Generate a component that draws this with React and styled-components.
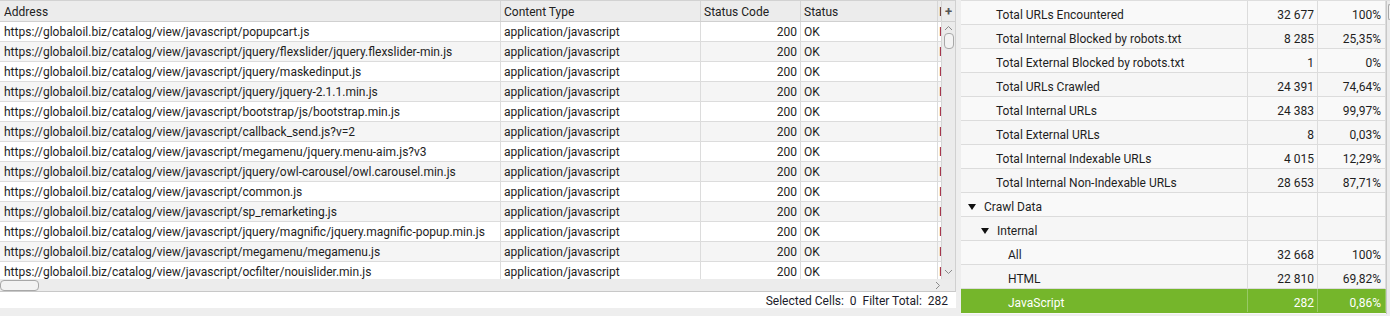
import React from 'react'
import styled, { createGlobalStyle } from 'styled-components'

const GlobalStyle = createGlobalStyle`
  html, body {
    margin: 0;
    padding: 0;
    overflow: hidden;
    background: #eeeeee;
    font-family: Roboto, 'Liberation Sans', sans-serif;
    font-size: 12px;
    color: #1e1e1e;
  }
`

const BASE = 'https://globaloil.biz/catalog/view/javascript/'

const urls = [
  'popupcart.js',
  'jquery/flexslider/jquery.flexslider-min.js',
  'jquery/maskedinput.js',
  'jquery/jquery-2.1.1.min.js',
  'bootstrap/js/bootstrap.min.js',
  'callback_send.js?v=2',
  'megamenu/jquery.menu-aim.js?v3',
  'jquery/owl-carousel/owl.carousel.min.js',
  'common.js',
  'sp_remarketing.js',
  'jquery/magnific/jquery.magnific-popup.min.js',
  'megamenu/megamenu.js',
  'ocfilter/nouislider.min.js',
]

const overview = [
  { label: 'Total URLs Encountered', count: '32 677', pct: '100%', level: 2 },
  { label: 'Total Internal Blocked by robots.txt', count: '8 285', pct: '25,35%', level: 2 },
  { label: 'Total External Blocked by robots.txt', count: '1', pct: '0%', level: 2 },
  { label: 'Total URLs Crawled', count: '24 391', pct: '74,64%', level: 2 },
  { label: 'Total Internal URLs', count: '24 383', pct: '99,97%', level: 2 },
  { label: 'Total External URLs', count: '8', pct: '0,03%', level: 2 },
  { label: 'Total Internal Indexable URLs', count: '4 015', pct: '12,29%', level: 2 },
  { label: 'Total Internal Non-Indexable URLs', count: '28 653', pct: '87,71%', level: 2 },
  { label: 'Crawl Data', level: 0, open: true },
  { label: 'Internal', level: 1, open: true },
  { label: 'All', count: '32 668', pct: '100%', level: 3 },
  { label: 'HTML', count: '22 810', pct: '69,82%', level: 3 },
  { label: 'JavaScript', count: '282', pct: '0,86%', level: 3, selected: true },
]

const indent = [7, 20, 35, 47]

const Page = styled.div`
  display: flex;
  width: 1390px;
  height: 316px;
  overflow: hidden;
  background: #eeeeee;
`

const LeftPane = styled.div`
  display: flex;
  flex-direction: column;
  width: 956px;
  flex-shrink: 0;
`

const GridFrame = styled.div`
  display: flex;
  height: 279px;
  background: #ffffff;
`

const Table = styled.div`
  width: 942px;
  overflow: hidden;
`

const cols = '501px 200px 100px 137px 40px'

const HeaderRow = styled.div`
  display: grid;
  grid-template-columns: ${cols};
  height: 22px;
  background: #ececec;
  border-top: 1px solid #d2d2d2;
  border-bottom: 1px solid #d0d0d0;
  box-sizing: border-box;
`

const HeaderCell = styled.div`
  padding: 2px ${({ $pad }) => $pad ?? 4}px 0;
  line-height: 18px;
  white-space: nowrap;
  overflow: hidden;
  border-right: 1px solid #d6d6d6;
  color: #222;
`

const Row = styled.div`
  display: grid;
  grid-template-columns: ${cols};
  height: 20px;
  background: ${({ $alt }) => ($alt ? '#f5f5f5' : '#ffffff')};
  border-bottom: 1px solid #dcdcdc;
  box-sizing: border-box;
`

const Cell = styled.div`
  padding: 2px ${({ $pad }) => $pad ?? 4}px 0;
  line-height: 17px;
  white-space: nowrap;
  overflow: hidden;
  text-align: ${({ $right }) => ($right ? 'right' : 'left')};
  border-right: 1px solid #dcdcdc;
  color: ${({ $color }) => $color || '#1e1e1e'};
`

const VScroll = styled.div`
  width: 13px;
  display: flex;
  flex-direction: column;
  align-items: center;
  background: #ebebeb;
  border-left: 1px solid #d6d6d6;
  border-right: 1px solid #d0d0d0;
`

const PlusButton = styled.div`
  width: 100%;
  height: 22px;
  border-top: 1px solid #d2d2d2;
  border-bottom: 1px solid #d0d0d0;
  box-sizing: border-box;
  display: flex;
  align-items: center;
  justify-content: center;
  font-weight: 700;
  font-size: 13px;
  color: #555;
`

const Thumb = styled.div`
  width: ${({ $w }) => $w}px;
  height: ${({ $h }) => $h}px;
  border: 1px solid #a8a8a8;
  border-radius: 4px;
  background: #f3f3f3;
  box-sizing: border-box;
  margin-top: ${({ $mt }) => $mt || 0}px;
`

const Arrow = styled.svg`
  display: block;
  flex-shrink: 0;
`

const Spacer = styled.div`
  flex: 1;
`

const HScroll = styled.div`
  height: 13px;
  display: flex;
  align-items: center;
  background: #ececec;
  border-bottom: 1px solid #c8c8c8;
  border-right: 1px solid #d0d0d0;
  box-sizing: border-box;
  padding-right: 14px;
`

const StatusBar = styled.div`
  height: 16px;
  box-sizing: border-box;
  padding: 3px 8px 0 0;
  background: #ffffff;
  text-align: right;
  line-height: 13px;
  white-space: pre;
  color: #1c1c2a;
`

const Gap = styled.div`
  width: 5px;
  flex-shrink: 0;
`

const RightPane = styled.div`
  flex: 1;
  display: flex;
  height: 313px;
  overflow: hidden;
  border-top: 1px solid #dedede;
  background: #f8f8f8;
`

const Overview = styled.div`
  width: 425px;
`

const OverRow = styled.div`
  display: grid;
  grid-template-columns: 287px 70px 68px;
  height: 24px;
  box-sizing: border-box;
  border-bottom: 1px solid ${({ $sel }) => ($sel ? '#75b62b' : '#dcdcdc')};
  background: ${({ $sel, $alt }) => ($sel ? '#75b62b' : $alt ? '#f6f6f6' : '#f9f9f9')};
  color: ${({ $sel }) => ($sel ? '#ffffff' : '#1e1e1e')};
`

const OverCell = styled.div`
  display: flex;
  align-items: center;
  justify-content: ${({ $right }) => ($right ? 'flex-end' : 'flex-start')};
  padding: 4px ${({ $pr }) => $pr || 0}px 0 ${({ $pl }) => $pl || 0}px;
  border-right: 1px solid ${({ $sel }) => ($sel ? '#98c967' : '#dcdcdc')};
  white-space: nowrap;
  overflow: hidden;
`

const Caret = styled.span`
  width: 16px;
  flex-shrink: 0;
  display: flex;
  align-items: center;

  &::before {
    content: '';
    border-left: 4px solid transparent;
    border-right: 4px solid transparent;
    border-top: 6px solid #111;
  }
`

const RightScroll = styled.div`
  flex: 1;
  border-left: 1px solid #c8c8c8;
  padding-top: 3px;
  background: #ebebeb;
`

const RightThumb = styled.div`
  height: 14px;
  border: 1px solid #a8a8a8;
  border-right: none;
  border-radius: 4px 0 0 4px;
  background: #f3f3f3;
  margin-left: 1px;
`

export default function App() {
  return (
    <>
      <GlobalStyle />
      <Page>
        <LeftPane>
          <GridFrame>
            <Table>
              <HeaderRow>
                <HeaderCell>Address</HeaderCell>
                <HeaderCell $pad={3}>Content Type</HeaderCell>
                <HeaderCell $pad={3}>Status Code</HeaderCell>
                <HeaderCell $pad={3}>Status</HeaderCell>
                <HeaderCell $pad={1}>Indexability</HeaderCell>
              </HeaderRow>
              {urls.map((u, i) => (
                <Row key={u} $alt={i % 2 === 1}>
                  <Cell>{BASE + u}</Cell>
                  <Cell $pad={3}>application/javascript</Cell>
                  <Cell $pad={3} $right>200</Cell>
                  <Cell $pad={3}>OK</Cell>
                  <Cell $pad={1} $color="#7a0a2e">Indexable</Cell>
                </Row>
              ))}
            </Table>
            <VScroll>
              <PlusButton>+</PlusButton>
              <Arrow width="9" height="6" viewBox="0 0 9 6" style={{ marginTop: 3 }}>
                <path d="M1 5 L4.5 1.5 L8 5" fill="none" stroke="#8a8a8a" strokeWidth="1" />
              </Arrow>
              <Thumb $w={10} $h={16} $mt={2} />
              <Spacer />
              <Arrow width="9" height="6" viewBox="0 0 9 6" style={{ marginBottom: 4 }}>
                <path d="M1 1 L4.5 4.5 L8 1" fill="none" stroke="#8a8a8a" strokeWidth="1" />
              </Arrow>
            </VScroll>
          </GridFrame>
          <HScroll>
            <Thumb $w={39} $h={11} />
            <Spacer />
            <Arrow width="6" height="9" viewBox="0 0 6 9">
              <path d="M1 1 L4.5 4.5 L1 8" fill="none" stroke="#8a8a8a" strokeWidth="1" />
            </Arrow>
          </HScroll>
          <StatusBar>{'Selected Cells:  0  Filter Total:  282'}</StatusBar>
        </LeftPane>
        <Gap />
        <RightPane>
          <Overview>
            {overview.map((r, i) => (
              <OverRow key={r.label} $sel={r.selected} $alt={i % 2 === 1}>
                <OverCell $sel={r.selected} $pl={indent[r.level]}>
                  {r.open && <Caret />}
                  {r.label}
                </OverCell>
                <OverCell $sel={r.selected} $right $pr={3}>{r.count}</OverCell>
                <OverCell $sel={r.selected} $right $pr={4}>{r.pct}</OverCell>
              </OverRow>
            ))}
          </Overview>
          <RightScroll>
            <RightThumb />
          </RightScroll>
        </RightPane>
      </Page>
    </>
  )
}
